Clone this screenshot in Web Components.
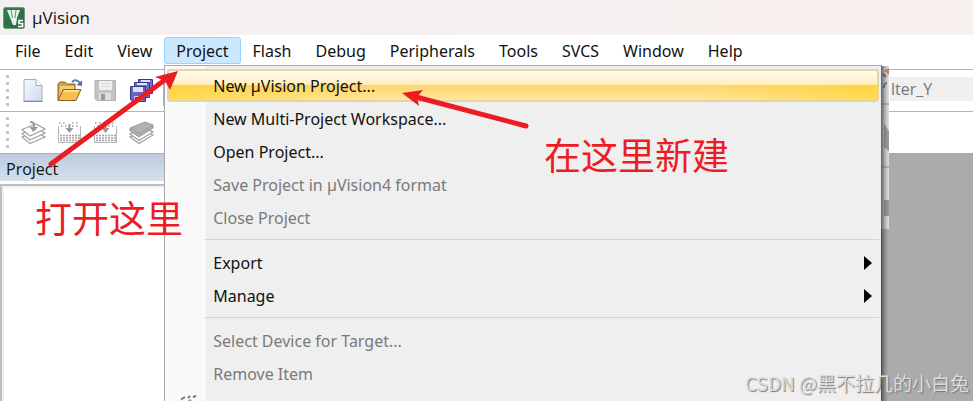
<!DOCTYPE html>
<html lang="en">
<head>
<meta charset="utf-8">
<title>µVision</title>
<style>
    html, body {
        height: 100%;
        margin: 0;
        overflow: hidden;
    }

    body {
        font: 16px/24px "Open Sans", "Noto Sans CJK SC", sans-serif;
        color: #111;
        background: #fff;
    }
</style>
</head>
<body>
<app-window>
    <title-bar slot="title">µVision</title-bar>

    <menu-bar slot="menu">
        <menu-entry label="File"></menu-entry>
        <menu-entry label="Edit"></menu-entry>
        <menu-entry label="View"></menu-entry>
        <menu-entry label="Project" open="true">
            <popup-menu>
                <popup-item active="true">New µVision Project...</popup-item>
                <popup-item>New Multi-Project Workspace...</popup-item>
                <popup-item>Open Project...</popup-item>
                <popup-item disabled="true">Save Project in µVision4 format</popup-item>
                <popup-item disabled="true">Close Project</popup-item>
                <popup-separator></popup-separator>
                <popup-item submenu="true">Export</popup-item>
                <popup-item submenu="true">Manage</popup-item>
                <popup-separator></popup-separator>
                <popup-item disabled="true">Select Device for Target...</popup-item>
                <popup-item disabled="true">Remove Item</popup-item>
                <popup-item disabled="true" icon="wand" shortcut="Alt+F7">Options...</popup-item>
            </popup-menu>
        </menu-entry>
        <menu-entry label="Flash"></menu-entry>
        <menu-entry label="Debug"></menu-entry>
        <menu-entry label="Peripherals"></menu-entry>
        <menu-entry label="Tools"></menu-entry>
        <menu-entry label="SVCS"></menu-entry>
        <menu-entry label="Window"></menu-entry>
        <menu-entry label="Help"></menu-entry>
    </menu-bar>

    <tool-bar slot="tools">
        <tool-button icon="new" label="New"></tool-button>
        <tool-button icon="open" label="Open"></tool-button>
        <tool-button icon="save" label="Save"></tool-button>
        <tool-button icon="saveall" label="Save All"></tool-button>
        <tool-divider></tool-divider>
        <target-select slot="end" value="lter_Y"></target-select>
    </tool-bar>
    <tool-bar slot="tools">
        <tool-button icon="translate" label="Translate"></tool-button>
        <tool-button icon="build" label="Build"></tool-button>
        <tool-button icon="build" label="Rebuild"></tool-button>
        <tool-button icon="batch" label="Batch Build"></tool-button>
    </tool-bar>

    <dock-panel slot="dock" heading="Project"></dock-panel>
</app-window>

<note-layer></note-layer>

<script>
const ICONS = {
    logo: `
        <rect x="0.5" y="0.5" width="21" height="21" rx="2" fill="#2f7a4c" stroke="#74967f"/>
        <path d="M1 14 L21 1 V21 H1Z" fill="#236b40" opacity=".5"/>
        <path d="M4 3 H17 L14 11 L13 18 H10 L8 13Z" fill="#e9f3ec"/>
        <path d="M8 3 L9.500 11 M13 3 L12 11" stroke="#2f7a4c" stroke-width=".8"/>
        <path d="M20 13.500 H16 V16.500 H19.500 V19.500 H15" fill="none" stroke="#fff" stroke-width="1.6"/>`,
    new: `
        <defs><linearGradient id="p" x2="1" y2="1"><stop stop-color="#f8faff"/><stop offset="1" stop-color="#cdd9ee"/></linearGradient></defs>
        <path d="M3 1.5 H15 L21 7.5 V23 H3Z" fill="url(#p)" stroke="#a3adc0"/>
        <path d="M15 1.5 V7.5 H21" fill="#fff" stroke="#a3adc0"/>
        <path d="M2.5 23.5 H21.5" stroke="#7f8aa0"/>`,
    open: `
        <path d="M1 22 V6 L3 4 H8 L10 6 H18 V11" fill="#d9a13a" stroke="#84622a"/>
        <path d="M3 8 H17 V12 H6 L2 20Z" fill="#f5cf73"/>
        <path d="M1 22.500 L6 11.500 H24 L19 22.500Z" fill="#f6bf4b" stroke="#84622a"/>
        <path d="M7 13 H21.500" stroke="#fde7a8" stroke-width="1.500"/>
        <path d="M15 4 Q19 0 23 5" fill="none" stroke="#5b7fae" stroke-width="2"/>
        <path d="M19.500 7 L25 8 L25 2.500Z" fill="#4a6f9f"/>`,
    save: `
        <path d="M2 2.500 H22.500 V22.500 H4 L2 20.500Z" fill="#c4c4c4" stroke="#b2b2b2"/>
        <rect x="6" y="3" width="13" height="9" fill="#efefef"/>
        <path d="M8 5.500 H17 M8 8.500 H17" stroke="#ddd"/>
        <rect x="6" y="15" width="12" height="7" fill="#dedede"/>
        <rect x="8" y="16" width="4" height="6" fill="#999"/>`,
    saveall: `
        <g stroke="#34368f">
            <path d="M9.500 1.500 H23.500 V15.500 H9.500Z" fill="#6d72d3"/>
            <path d="M12 2 H21 V4 H12Z" fill="#dfe3f8" stroke="none"/>
            <path d="M5.500 4.500 H20.500 V19.500 H5.500Z" fill="#686dd0"/>
            <path d="M8 5 H18 V7 H8Z" fill="#dfe3f8" stroke="none"/>
            <path d="M1.500 8.500 H16.500 V23.500 H3.500 L1.500 21.500Z" fill="#6166c8"/>
        </g>
        <rect x="4" y="9" width="10" height="5" fill="#dfe4f8"/>
        <rect x="5" y="18" width="8" height="5" fill="#c9cdea"/>
        <rect x="6" y="19" width="3" height="4" fill="#34368f"/>`,
    translate: `
        <g fill="#fff" stroke="#a3a3a3" stroke-width="1.200">
            <path d="M1 17 L9 23.500 L24 17 L15 12Z"/>
            <path d="M1 13.500 L9 20 L24 13 L15 8Z"/>
            <path d="M1 9.500 L9 16 L24 9 L15 4Z"/>
        </g>
        <path d="M9 2 Q13 2 13 5 V8" fill="none" stroke="#999" stroke-width="2"/>
        <path d="M8.500 7 H17 L12.500 12Z" fill="#999"/>`,
    build: `
        <path d="M2 3 H9 M15 3 H23 M4 6 H10 M15 6 H21" stroke="#a0a0a0" stroke-width="1.500" stroke-dasharray="1.500 2.500"/>
        <path d="M1.500 6 V22.500 H23.500 V6" fill="none" stroke="#b5b5b5"/>
        <path d="M3 15.500 H23 M3 18 H23 M3 20.500 H23" stroke="#a5a5a5" stroke-width="1.500" stroke-dasharray="2 1"/>
        <path d="M12.500 4 V9" stroke="#999" stroke-width="2"/>
        <path d="M8.500 8 H16.500 L12.500 13Z" fill="#999"/>`,
    batch: `
        <g fill="#fff" stroke="#a0a0a0" stroke-width="1.200">
            <path d="M1 17 L10 23.500 L24 15 L16 11Z"/>
            <path d="M1 14 L10 20.500 L24 12 L16 8Z"/>
        </g>
        <path d="M1 8 L16 2 L24 5 V8 L10 17 L1 11Z" fill="#b2b2b2" stroke="#999"/>
        <path d="M1 8 L10 14 L24 5.500" fill="none" stroke="#999"/>`,
    wand: `
        <path d="M2 14 L12 5" stroke="#999" stroke-width="3"/>
        <path d="M2 4.500 L6 2 M9 3 L11 1 M14 2 L17 1" stroke="#777" stroke-width="2"/>`
};

function icon(name, size) {
    return `<svg width="${size}" height="${size}" viewBox="0 0 ${size} ${size}" aria-hidden="true">${ICONS[name]}</svg>`;
}

// Small base class: every element renders once into an open root
class BaseElement extends HTMLElement {
    constructor() {
        super();
        this.attachShadow({ mode: 'open' });
    }

    connectedCallback() {
        this.shadowRoot.innerHTML = this.render();
    }
}

class AppWindow extends BaseElement {
    render() {
        return `
            <style>
                :host {
                    display: flex;
                    flex-direction: column;
                    height: 100vh;
                }

                .body {
                    display: grid;
                    grid-template-columns: 2fr 3fr;
                    flex: 1;
                    min-height: 0;
                    background: #ababab;
                }
            </style>
            <slot name="title"></slot>
            <slot name="menu"></slot>
            <slot name="tools"></slot>
            <div class="body"><slot name="dock"></slot></div>
        `;
    }
}

class TitleBar extends BaseElement {
    render() {
        return `
            <style>
                :host {
                    display: flex;
                    align-items: center;
                    gap: 7px;
                    height: 35px;
                    padding-left: 3px;
                    font-size: 17px;
                    background: linear-gradient(90deg, #f4f0f2, #f8f0ef);
                }
            </style>
            ${icon('logo', 22)}
            <span><slot></slot></span>
        `;
    }
}

class MenuBar extends BaseElement {
    render() {
        return `
            <style>
                :host {
                    display: flex;
                    padding: 2px 3px 5px;
                    font-family: "Noto Sans", sans-serif;
                    background: #fff;
                }
            </style>
            <slot></slot>
        `;
    }
}

class MenuEntry extends BaseElement {
    render() {
        const isOpen = this.getAttribute('open') === 'true';

        return `
            <style>
                :host {
                    display: block;
                    position: relative;
                }

                button {
                    display: block;
                    height: 27px;
                    padding: 0 11px;
                    border: 1px solid ${isOpen ? '#99d1ff' : 'transparent'};
                    border-radius: 3px;
                    font: inherit;
                    color: inherit;
                    background: ${isOpen ? '#cce8ff' : 'none'};
                }

                .drop {
                    position: absolute;
                    top: 28px;
                    left: 0;
                    z-index: 2;
                }
            </style>
            <button type="button">${this.getAttribute('label')}</button>
            <div class="drop"><slot></slot></div>
        `;
    }
}

class PopupMenu extends BaseElement {
    render() {
        return `
            <style>
                :host {
                    display: block;
                    box-sizing: border-box;
                    position: relative;
                    width: calc(100vw - 255px);
                    padding: 3px 2px;
                    border: 1px solid #a9a9b0;
                    border-right-color: #777;
                    background: linear-gradient(90deg, #f9f9f9 41px, #efefef 41px);
                }

                .edge {
                    position: absolute;
                    top: 0;
                    left: 100%;
                }
            </style>
            <slot></slot>
            <svg class="edge" width="8" height="340" viewBox="0 0 8 340" aria-hidden="true">
                <defs>
                    <linearGradient id="s">
                        <stop stop-color="#333" stop-opacity=".75"/>
                        <stop offset=".5" stop-color="#555" stop-opacity=".35"/>
                        <stop offset="1" stop-color="#888" stop-opacity="0"/>
                    </linearGradient>
                </defs>
                <rect width="8" height="163" fill="#dedede"/>
                <path d="M4 5 L7 4 V8" stroke="#ca7a48" stroke-width="2" fill="none"/>
                <path d="M2 8 L5 11" stroke="#3e74a5" stroke-width="2"/>
                <path d="M3 22 Q3 17 6 17" stroke="#557b98" stroke-width="2" fill="none"/>
                <path d="M1 38 H8 M1 101 H8" stroke="#8d8d8d"/>
                <path d="M3 58 L8 65 V85 L3 81Z" fill="#9b9b9b"/>
                <rect x="3" y="134" width="5" height="16" fill="#989898"/>
                <rect width="8" height="340" fill="url(#s)"/>
            </svg>
        `;
    }
}

class PopupItem extends BaseElement {
    render() {
        const isActive = this.getAttribute('active') === 'true';
        const isDisabled = this.getAttribute('disabled') === 'true';
        const iconName = this.getAttribute('icon');

        return `
            <style>
                :host {
                    display: block;
                }

                button {
                    display: grid;
                    grid-template-columns: 34px 1fr auto 14px;
                    align-items: center;
                    box-sizing: border-box;
                    width: 100%;
                    height: 33px;
                    padding: 0 0 0 11px;
                    border: 1px solid transparent;
                    border-radius: 3px;
                    font: inherit;
                    text-align: left;
                    color: ${isDisabled ? '#7a7a7a' : 'inherit'};
                    background: none;
                }

                button.active {
                    border: 2px solid #e2d6a4;
                    padding-left: 10px;
                    background:
                        linear-gradient(90deg, rgba(255, 212, 48, .7), transparent 30%, transparent 75%, rgba(255, 212, 48, .7)) 0 100% / 100% 52% no-repeat,
                        linear-gradient(#fffdf0, #ffeebb 48%, #ffd46a 48%, #ffe7a0);
                }

                .shortcut {
                    padding-right: 4px;
                }
            </style>
            <button type="button" class="${isActive ? 'active' : ''}" ${isDisabled ? 'disabled' : ''}>
                <span>${iconName ? icon(iconName, 18) : ''}</span>
                <span><slot></slot></span>
                <span class="shortcut">${this.getAttribute('shortcut') || ''}</span>
                ${this.getAttribute('submenu') === 'true'
                    ? '<svg width="8" height="14" viewBox="0 0 8 14" aria-hidden="true"><path d="M0 0 L8 7 L0 14Z" fill="#000"/></svg>'
                    : ''}
            </button>
        `;
    }
}

class PopupSeparator extends BaseElement {
    render() {
        return `
            <style>
                :host {
                    display: block;
                    padding: 5px 0 6px 38px;
                }

                div {
                    height: 1px;
                    background: #d3d3d3;
                }
            </style>
            <div></div>
        `;
    }
}

class ToolBar extends BaseElement {
    render() {
        return `
            <style>
                :host {
                    display: flex;
                    align-items: center;
                    box-sizing: border-box;
                    height: 42px;
                    padding-left: 6px;
                    border-top: 1px solid #b4b4b4;
                    background: #fff;
                }

                .grip {
                    width: 3px;
                    height: 32px;
                    margin-right: 12px;
                    background: repeating-linear-gradient(#c4c4c4 0 3px, transparent 3px 7px);
                }

                .tools {
                    display: flex;
                    align-items: center;
                    gap: 11px;
                    flex: 1;
                }
            </style>
            <div class="grip"></div>
            <div class="tools"><slot></slot></div>
            <slot name="end"></slot>
        `;
    }
}

class ToolButton extends BaseElement {
    render() {
        return `
            <style>
                :host {
                    display: block;
                }

                button {
                    display: block;
                    padding: 0;
                    border: 0;
                    background: none;
                }

                svg {
                    display: block;
                }
            </style>
            <button type="button" aria-label="${this.getAttribute('label')}">${icon(this.getAttribute('icon'), 25)}</button>
        `;
    }
}

class ToolDivider extends BaseElement {
    render() {
        return `
            <style>
                :host {
                    display: block;
                    width: 2px;
                    height: 30px;
                    margin-left: -2px;
                    background: #aaa;
                }
            </style>
        `;
    }
}

class TargetSelect extends BaseElement {
    render() {
        return `
            <style>
                :host {
                    display: block;
                    padding-bottom: 4px;
                }

                select {
                    display: block;
                    appearance: none;
                    width: 83px;
                    height: 24px;
                    padding: 0 1px;
                    border: 0;
                    border-radius: 0;
                    font: inherit;
                    color: #777;
                    background: #f0f0f0;
                }
            </style>
            <select aria-label="Target"><option>${this.getAttribute('value')}</option></select>
        `;
    }
}

class DockPanel extends BaseElement {
    render() {
        return `
            <style>
                :host {
                    display: flex;
                    flex-direction: column;
                    background: #fff;
                }

                header {
                    height: 28px;
                    box-sizing: border-box;
                    padding: 3px 6px 0;
                    border-top: 1px solid #a8b2bd;
                    background: linear-gradient(#bccbdb, #d3e1ef);
                }

                .tree {
                    flex: 1;
                    margin-top: 3px;
                    border: 2px solid #bfbfbf;
                    border-bottom: 0;
                    box-shadow: inset 2px 2px #f1f1f1;
                }
            </style>
            <header>${this.getAttribute('heading')}</header>
            <div class="tree"></div>
        `;
    }
}

// Hand-drawn notes and the watermark, floating over the whole window
class NoteLayer extends BaseElement {
    render() {
        return `
            <style>
                :host {
                    display: block;
                    position: absolute;
                    inset: 0;
                    z-index: 5;
                    pointer-events: none;
                    font-family: "Noto Sans CJK SC", sans-serif;
                }

                .arrows, .note, .mark {
                    position: absolute;
                }

                .arrows {
                    top: 0;
                    left: 0;
                }

                .note {
                    font-size: 37px;
                    line-height: 48px;
                    color: #ed1c24;
                    white-space: nowrap;
                }

                .first {
                    left: 35px;
                    top: 193px;
                }

                .second {
                    left: 544px;
                    top: 130px;
                }

                .mark {
                    right: 4px;
                    bottom: 4px;
                    font-size: 19px;
                    line-height: 28px;
                    color: #dcdcdc;
                    text-shadow: 1px 1px 1px #777;
                }
            </style>
            <svg class="arrows" width="560" height="180" viewBox="0 0 560 180" aria-hidden="true">
                <g stroke="#ed1c24" stroke-width="5" stroke-linecap="round">
                    <path d="M51 164 L166 79"/>
                    <path d="M526 126 L416 97"/>
                </g>
                <path d="M178 71 L170 90 L165 81 L155 77Z" fill="#ed1c24"/>
                <path d="M402 93 L423 90 L417 97 L419 106Z" fill="#ed1c24"/>
            </svg>
            <div class="note first">打开这里</div>
            <div class="note second">在这里新建</div>
            <div class="mark">CSDN @黑不拉几的小白兔</div>
        `;
    }
}

// Define the custom elements
customElements.define('app-window', AppWindow);
customElements.define('title-bar', TitleBar);
customElements.define('menu-bar', MenuBar);
customElements.define('menu-entry', MenuEntry);
customElements.define('popup-menu', PopupMenu);
customElements.define('popup-item', PopupItem);
customElements.define('popup-separator', PopupSeparator);
customElements.define('tool-bar', ToolBar);
customElements.define('tool-button', ToolButton);
customElements.define('tool-divider', ToolDivider);
customElements.define('target-select', TargetSelect);
customElements.define('dock-panel', DockPanel);
customElements.define('note-layer', NoteLayer);
</script>
</body>
</html>
